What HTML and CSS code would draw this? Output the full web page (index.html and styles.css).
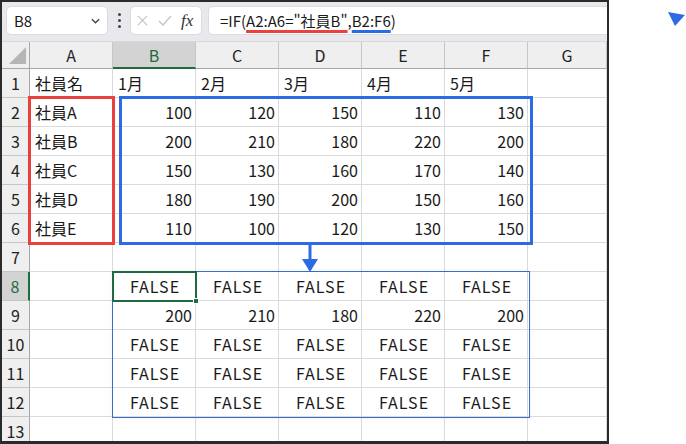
FILE: index.html
```html
<!DOCTYPE html>
<html lang="ja">
<head>
    <meta charset="UTF-8">
    <title>IF spill</title>
    <link rel="stylesheet" href="styles.css">
</head>
<body>
    <div class="window">
        <div class="toolbar">
            <div class="namebox">
                <span>B8</span>
                <svg class="chevron" viewBox="0 0 10 6"><polyline points="1,1 5,5 9,1"/></svg>
            </div>
            <div class="dots"><i></i><i></i><i></i></div>
            <div class="btns">
                <svg class="btn-x" viewBox="0 0 12 12"><line x1="1" y1="1" x2="11" y2="11"/><line x1="11" y1="1" x2="1" y2="11"/></svg>
                <svg class="btn-ok" viewBox="0 0 14 12"><polyline points="1,6 5,10 13,1"/></svg>
                <span class="fx">fx</span>
            </div>
            <div class="formula">
                <span class="formula-text">=IF(<span class="u-red">A2:A6="社員B"</span>,<span class="u-blue">B2:F6</span>)</span>
            </div>
        </div>

        <div class="sheet">
            <div class="grid">
                <div class="corner"><svg viewBox="0 0 20 20"><polygon points="19,1 19,19 1,19"/></svg></div>
                <div class="colhead">A</div>
                <div class="colhead sel">B</div>
                <div class="colhead">C</div>
                <div class="colhead">D</div>
                <div class="colhead">E</div>
                <div class="colhead">F</div>
                <div class="colhead">G</div>

                <div class="rowhead">1</div>
                <div class="cell">社員名</div><div class="cell">1月</div><div class="cell">2月</div><div class="cell">3月</div><div class="cell">4月</div><div class="cell">5月</div><div class="cell"></div>

                <div class="rowhead">2</div>
                <div class="cell">社員A</div><div class="cell num">100</div><div class="cell num">120</div><div class="cell num">150</div><div class="cell num">110</div><div class="cell num">130</div><div class="cell"></div>

                <div class="rowhead">3</div>
                <div class="cell">社員B</div><div class="cell num">200</div><div class="cell num">210</div><div class="cell num">180</div><div class="cell num">220</div><div class="cell num">200</div><div class="cell"></div>

                <div class="rowhead">4</div>
                <div class="cell">社員C</div><div class="cell num">150</div><div class="cell num">130</div><div class="cell num">160</div><div class="cell num">170</div><div class="cell num">140</div><div class="cell"></div>

                <div class="rowhead">5</div>
                <div class="cell">社員D</div><div class="cell num">180</div><div class="cell num">190</div><div class="cell num">200</div><div class="cell num">150</div><div class="cell num">160</div><div class="cell"></div>

                <div class="rowhead">6</div>
                <div class="cell">社員E</div><div class="cell num">110</div><div class="cell num">100</div><div class="cell num">120</div><div class="cell num">130</div><div class="cell num">150</div><div class="cell"></div>

                <div class="rowhead">7</div>
                <div class="cell"></div><div class="cell"></div><div class="cell"></div><div class="cell"></div><div class="cell"></div><div class="cell"></div><div class="cell"></div>

                <div class="rowhead sel">8</div>
                <div class="cell"></div><div class="cell bool">FALSE</div><div class="cell bool">FALSE</div><div class="cell bool">FALSE</div><div class="cell bool">FALSE</div><div class="cell bool">FALSE</div><div class="cell"></div>

                <div class="rowhead">9</div>
                <div class="cell"></div><div class="cell num">200</div><div class="cell num">210</div><div class="cell num">180</div><div class="cell num">220</div><div class="cell num">200</div><div class="cell"></div>

                <div class="rowhead">10</div>
                <div class="cell"></div><div class="cell bool">FALSE</div><div class="cell bool">FALSE</div><div class="cell bool">FALSE</div><div class="cell bool">FALSE</div><div class="cell bool">FALSE</div><div class="cell"></div>

                <div class="rowhead">11</div>
                <div class="cell"></div><div class="cell bool">FALSE</div><div class="cell bool">FALSE</div><div class="cell bool">FALSE</div><div class="cell bool">FALSE</div><div class="cell bool">FALSE</div><div class="cell"></div>

                <div class="rowhead">12</div>
                <div class="cell"></div><div class="cell bool">FALSE</div><div class="cell bool">FALSE</div><div class="cell bool">FALSE</div><div class="cell bool">FALSE</div><div class="cell bool">FALSE</div><div class="cell"></div>

                <div class="rowhead">13</div>
                <div class="cell"></div><div class="cell"></div><div class="cell"></div><div class="cell"></div><div class="cell"></div><div class="cell"></div><div class="cell"></div>
            </div>

            <!-- annotations drawn over the grid -->
            <div class="mark-red"></div>
            <div class="mark-blue"></div>
            <svg class="arrow" viewBox="0 0 16 27">
                <line x1="8" y1="0" x2="8" y2="16"/>
                <polygon points="0,14 16,14 8,27"/>
            </svg>
            <div class="spill"></div>
            <div class="active"><span class="handle"></span></div>
        </div>
    </div>

    <div class="side">
        <svg class="pointer" viewBox="0 0 18 15"><polygon points="0,0 17,3 7,14"/></svg>
    </div>
</body>
</html>
```

FILE: styles.css
```css
* {
    margin: 0;
    padding: 0;
    box-sizing: border-box;
}

body {
    font-family: "Noto Sans CJK JP", "Noto Sans", sans-serif;
    color: #1a1a1a;
    background: #fff;
    display: flex;
    width: 686px;
    height: 444px;
    overflow: hidden;
}

.window {
    width: 609px;
    height: 444px;
    border: 2px solid #2b2b2b;
    border-bottom-width: 3px;
    background: #e9e9ed;
    display: flex;
    flex-direction: column;
    overflow: hidden;
}

/* formula bar */
.toolbar {
    height: 40px;
    flex-shrink: 0;
    display: flex;
    align-items: flex-start;
    padding: 4px 0 0 4px;
    border-bottom: 1px solid #d8d8dc;
}

.namebox,
.btns,
.formula {
    height: 29px;
    background: #fff;
    border: 1px solid #dcdce0;
    border-radius: 5px;
    display: flex;
    align-items: center;
}

.namebox {
    width: 102px;
    padding: 0 7px 0 7px;
    justify-content: space-between;
    font-size: 15px;
}

.chevron {
    width: 9px;
    height: 6px;
    fill: none;
    stroke: #444;
    stroke-width: 1.5;
}

.dots {
    width: 22px;
    height: 29px;
    display: flex;
    flex-direction: column;
    align-items: center;
    justify-content: center;
    gap: 3px;
}

.dots i {
    width: 3px;
    height: 3px;
    background: #444;
    border-radius: 50%;
}

.btns {
    width: 72px;
    padding: 0 4px 0 6px;
    gap: 10px;
}

.btn-x {
    width: 11px;
    height: 11px;
    stroke: #c4c4c4;
    stroke-width: 1.3;
}

.btn-ok {
    width: 14px;
    height: 12px;
    fill: none;
    stroke: #c4c4c4;
    stroke-width: 1.3;
}

.fx {
    font-family: "Liberation Serif", serif;
    font-style: italic;
    font-size: 17px;
    color: #333;
    margin-left: -1px;
}

.formula {
    flex: 1;
    margin-left: 6px;
    border-right: none;
    border-radius: 5px 0 0 5px;
    padding-left: 11px;
    font-size: 15px;
}

.formula-text {
    white-space: nowrap;
}

.u-red,
.u-blue {
    text-decoration: underline;
    text-decoration-thickness: 3px;
    text-underline-offset: 3px;
}

.u-red {
    text-decoration-color: #e8413e;
}

.u-blue {
    text-decoration-color: #2d6be4;
}

/* sheet */
.sheet {
    position: relative;
    flex: 1;
    overflow: hidden;
    background: #fff;
}

.grid {
    display: grid;
    grid-template-columns: 28px repeat(6, 83px) 1fr;
    grid-template-rows: 27px repeat(13, 29px);
    font-size: 16px;
}

.grid > div {
    border-right: 1px solid #dadada;
    border-bottom: 1px solid #dadada;
    display: flex;
    align-items: center;
    white-space: nowrap;
}

.corner,
.colhead,
.rowhead {
    background: #efefef;
    color: #222;
}

.grid > .corner {
    border-right-color: #a8a8a8;
    border-bottom-color: #a8a8a8;
    justify-content: flex-end;
    align-items: flex-end;
    padding: 0 2px 3px 0;
}

.corner svg {
    width: 19px;
    height: 19px;
    fill: #b5b5b5;
}

.grid > .colhead {
    justify-content: center;
    border-right-color: #c6c6c6;
    border-bottom-color: #a8a8a8;
}

.grid > .rowhead {
    justify-content: center;
    border-right-color: #a8a8a8;
    border-bottom-color: #c6c6c6;
}

.grid > .colhead.sel {
    background: #d3d3d3;
    color: #1e6b41;
    border-bottom: 2px solid #1e6b41;
}

.grid > .rowhead.sel {
    background: #d3d3d3;
    color: #1e6b41;
    border-right: 2px solid #1e6b41;
}

.cell {
    padding: 0 3px 0 5px;
}

.num {
    justify-content: flex-end;
}

.bool {
    justify-content: center;
    letter-spacing: 1px;
}

/* annotations */
.mark-red,
.mark-blue {
    position: absolute;
    top: 54px;
    height: 149px;
    border: 3px solid;
}

.mark-red {
    left: 26px;
    width: 87px;
    border-color: #e8413e;
}

.mark-blue {
    left: 117px;
    width: 414px;
    border-color: #2d6be4;
}

.arrow {
    position: absolute;
    left: 300px;
    top: 203px;
    width: 16px;
    height: 27px;
}

.arrow line {
    stroke: #2d6be4;
    stroke-width: 3;
}

.arrow polygon {
    fill: #2d6be4;
}

.spill {
    position: absolute;
    left: 110px;
    top: 229px;
    width: 418px;
    height: 147px;
    border: 1px solid #3a6cc9;
    box-shadow: 0 0 5px rgba(0, 0, 0, 0.06);
}

.active {
    position: absolute;
    left: 110px;
    top: 229px;
    width: 85px;
    height: 31px;
    border: 2px solid #1e6b41;
}

.handle {
    position: absolute;
    right: -4px;
    bottom: -4px;
    width: 6px;
    height: 6px;
    background: #1e6b41;
    border: 1px solid #fff;
}

.side {
    flex: 1;
    position: relative;
}

.pointer {
    position: absolute;
    left: 59px;
    top: 12px;
    width: 18px;
    height: 15px;
    fill: #2d6be4;
}
```
